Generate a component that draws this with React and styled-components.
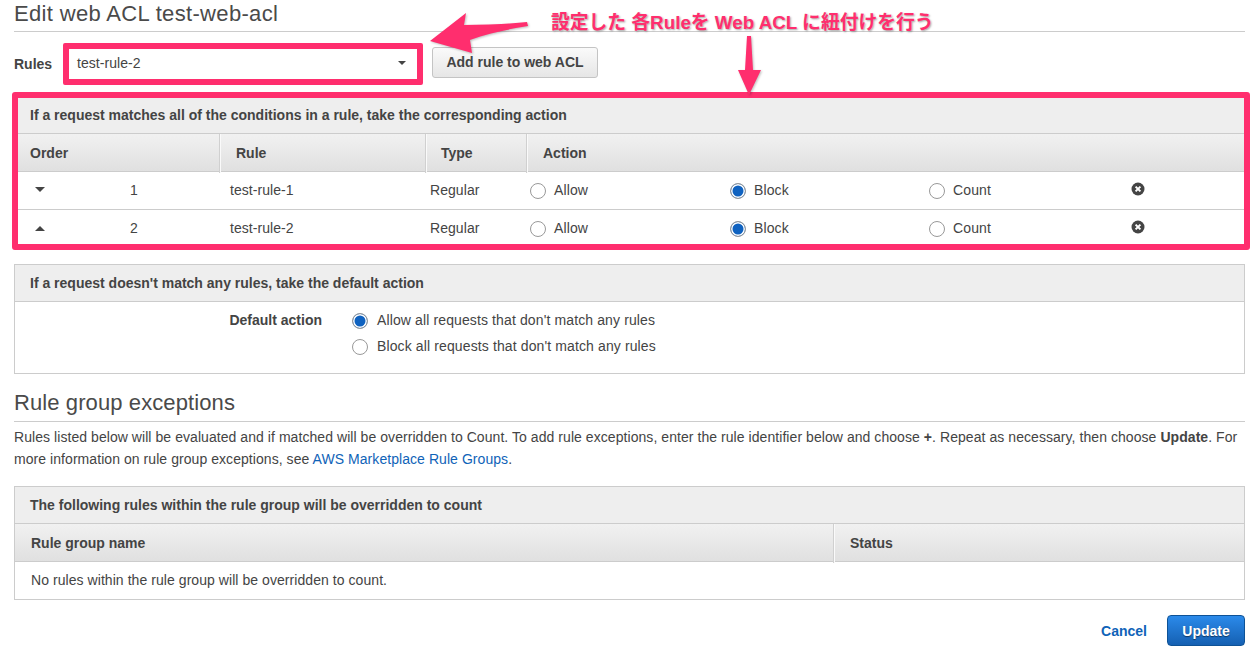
import React from 'react';
import styled, { createGlobalStyle } from 'styled-components';

const pink = '#ff2e6e';

const GlobalStyle = createGlobalStyle`
  html, body {
    margin: 0;
    padding: 0;
    background: #fff;
  }
  body {
    font-family: "Liberation Sans", Arial, sans-serif;
    font-size: 14px;
    letter-spacing: 0.06px;
    color: #444;
  }
`;

const Page = styled.div`
  position: relative;
  box-sizing: border-box;
  width: 1255px;
  height: 658px;
  padding: 0 10px 0 14px;
  overflow: hidden;
`;

const SectionTitle = styled.h2`
  margin: 0;
  height: ${(p) => p.$height || 31}px;
  line-height: ${(p) => p.$lineHeight || 27}px;
  font-size: 22px;
  font-weight: 400;
  letter-spacing: ${(p) => p.$spacing}px;
  color: #4a4a4a;
  border-bottom: 1px solid #ccc;
`;

const RulesRow = styled.div`
  display: flex;
  align-items: center;
  height: 42px;
  margin-top: 11px;
`;

const RulesLabel = styled.label`
  width: 49px;
  font-weight: 700;
  letter-spacing: 0;
`;

const SelectFrame = styled.div`
  box-sizing: border-box;
  display: flex;
  align-items: center;
  justify-content: space-between;
  width: 360px;
  height: 42px;
  padding: 0 11px 2px 8px;
  background: #fff;
  border: 6px solid ${pink};
  border-radius: 2px;
`;

const SelectCaret = styled.span`
  width: 0;
  height: 0;
  margin-top: -1px;
  border-left: 4px solid transparent;
  border-right: 4px solid transparent;
  border-top: 4px solid #444;
`;

const Button = styled.button`
  box-sizing: border-box;
  height: 31px;
  padding: 0;
  font: 700 14px "Liberation Sans", Arial, sans-serif;
  color: #444;
  background: linear-gradient(#fafafa, #e6e6e6);
  border: 1px solid #c4c4c4;
  border-radius: 3px;
`;

const AddButton = styled(Button)`
  width: 166px;
  margin-left: 9px;
  margin-top: -4px;
`;

const RulesPanelWrap = styled.div`
  position: relative;
  margin-top: 7px;
  padding-top: 4px;
`;

const Highlight = styled.div`
  position: absolute;
  top: 0;
  left: -2px;
  right: -5px;
  height: 158px;
  box-sizing: border-box;
  border: 6px solid ${pink};
  border-radius: 3px;
  pointer-events: none;
`;

const Panel = styled.section`
  box-sizing: border-box;
  border: 1px solid #ccc;
  margin-top: ${(p) => p.$top || 0}px;
  background: #fff;
`;

const PanelHeader = styled.div`
  box-sizing: border-box;
  height: 37px;
  line-height: 37px;
  padding-left: 15px;
  font-weight: 700;
  letter-spacing: 0;
  background: #eee;
  border-bottom: 1px solid #ccc;
`;

const ColumnRow = styled.div`
  display: grid;
  grid-template-columns: ${(p) => p.$columns};
  box-sizing: border-box;
  height: 38px;
  background: linear-gradient(#f1f1f1, #e0e0e0);
  border-bottom: 1px solid #ccc;
`;

const ColumnHead = styled.div`
  box-sizing: border-box;
  line-height: 39px;
  padding-left: ${(p) => p.$pad || 15}px;
  font-weight: 700;
  letter-spacing: 0;
  border-left: ${(p) => (p.$first ? 'none' : '1px solid #fafafa')};
  border-right: ${(p) => (p.$last ? 'none' : '1px solid #d0d0d0')};
`;

const RuleRow = styled.div`
  display: grid;
  grid-template-columns: 23px 172px 200px 100px 200px 199px 202px 1fr;
  align-items: center;
  box-sizing: border-box;
  height: 38px;
  padding: 0 0 2px 20px;
  border-bottom: ${(p) => (p.$last ? 'none' : '1px solid #ccc')};
`;

const OrderCaret = styled.span`
  width: 0;
  height: 0;
  border-left: 5px solid transparent;
  border-right: 5px solid transparent;
  ${(p) => (p.$up ? 'border-bottom: 5px solid #444;' : 'border-top: 5px solid #444;')}
`;

const OrderNumber = styled.span`
  padding-left: 72px;
`;

const RadioLabel = styled.label`
  display: flex;
  align-items: center;
  gap: ${(p) => p.$gap || 8}px;
  letter-spacing: 0.12px;
  white-space: nowrap;
`;

const Radio = styled.span`
  box-sizing: border-box;
  display: inline-block;
  flex: none;
  width: 16px;
  height: 16px;
  margin-top: 2px;
  border-radius: 50%;
  border: 1px solid #999;
  background: ${(p) => (p.$checked ? '#0f62c0' : '#fff')};
  box-shadow: ${(p) => (p.$checked ? 'inset 0 0 0 1.5px #fff' : 'none')};
`;

const RemoveIcon = styled.svg`
  display: block;
  width: 14px;
  height: 14px;
  margin-top: -2px;
`;

const DefaultBody = styled.div`
  display: grid;
  grid-template-columns: 337px 1fr;
  box-sizing: border-box;
  height: 71px;
  padding-top: 5px;
`;

const DefaultLabel = styled.div`
  font-weight: 700;
  letter-spacing: 0;
  text-align: right;
  padding-right: 30px;
  line-height: 26px;
`;

const DefaultOptions = styled.div`
  display: flex;
  flex-direction: column;
`;

const DefaultOption = styled(RadioLabel)`
  height: 26px;
`;

const Paragraph = styled.p`
  margin: 4px 0 0;
  line-height: 22px;
  height: 44px;
`;

const Link = styled.a`
  color: #0f63b8;
  text-decoration: none;
`;

const EmptyRow = styled.div`
  box-sizing: border-box;
  height: 37px;
  line-height: 37px;
  padding-left: 16px;
`;

const Footer = styled.div`
  display: flex;
  justify-content: flex-end;
  align-items: center;
  gap: 20px;
  margin-top: 15px;
`;

const CancelLink = styled(Link)`
  font-weight: 700;
  letter-spacing: 0;
`;

const UpdateButton = styled(Button)`
  width: 78px;
  color: #fff;
  background: linear-gradient(#2b8aea, #1560b2);
  border-color: #0e5296;
  border-radius: 4px;
  text-shadow: 0 1px 1px rgba(0, 0, 0, 0.5);
`;

const Annotation = styled.div`
  position: absolute;
  top: 12px;
  left: 551px;
  white-space: nowrap;
  font-family: "Liberation Sans", "Noto Sans CJK JP", sans-serif;
  font-size: 18.8px;
  font-weight: 700;
  letter-spacing: 0;
  line-height: 22px;
  color: ${pink};
  text-shadow: 1px 1px 2px rgba(0, 0, 0, 0.35), 0 0 2px #fff;
`;

const ArrowLayer = styled.svg`
  position: absolute;
  top: 0;
  left: 0;
  width: 1255px;
  height: 110px;
  pointer-events: none;
  filter: drop-shadow(1px 1px 1px rgba(0, 0, 0, 0.25));
`;

const rules = [
  { order: 1, name: 'test-rule-1', up: false },
  { order: 2, name: 'test-rule-2', up: true },
];

function Remove() {
  return (
    <RemoveIcon viewBox="0 0 14 14">
      <circle cx="7" cy="7" r="6.5" fill="#444" />
      <path d="M4.6 4.6l4.8 4.8M9.4 4.6l-4.8 4.8" stroke="#fff" strokeWidth="2" />
    </RemoveIcon>
  );
}

function Option({ checked, children }) {
  return (
    <RadioLabel>
      <Radio $checked={checked} />
      {children}
    </RadioLabel>
  );
}

export default function App() {
  return (
    <Page>
      <GlobalStyle />
      <SectionTitle $spacing={0.33}>Edit web ACL test-web-acl</SectionTitle>

      <RulesRow>
        <RulesLabel>Rules</RulesLabel>
        <SelectFrame>
          test-rule-2
          <SelectCaret />
        </SelectFrame>
        <AddButton>Add rule to web ACL</AddButton>
      </RulesRow>

      <RulesPanelWrap>
        <Panel>
          <PanelHeader>If a request matches all of the conditions in a rule, take the corresponding action</PanelHeader>
          <ColumnRow $columns="205px 206px 101px 1fr">
            <ColumnHead $first>Order</ColumnHead>
            <ColumnHead>Rule</ColumnHead>
            <ColumnHead $pad={14}>Type</ColumnHead>
            <ColumnHead $last>Action</ColumnHead>
          </ColumnRow>
          {rules.map((rule, i) => (
            <RuleRow key={rule.order} $last={i === rules.length - 1}>
              <OrderCaret $up={rule.up} />
              <OrderNumber>{rule.order}</OrderNumber>
              <span>{rule.name}</span>
              <span>Regular</span>
              <Option>Allow</Option>
              <Option checked>Block</Option>
              <Option>Count</Option>
              <Remove />
            </RuleRow>
          ))}
        </Panel>
        <Highlight />
      </RulesPanelWrap>

      <Panel $top={15}>
        <PanelHeader>If a request doesn't match any rules, take the default action</PanelHeader>
        <DefaultBody>
          <DefaultLabel>Default action</DefaultLabel>
          <DefaultOptions>
            <DefaultOption $gap={9}>
              <Radio $checked />
              Allow all requests that don't match any rules
            </DefaultOption>
            <DefaultOption $gap={9}>
              <Radio />
              Block all requests that don't match any rules
            </DefaultOption>
          </DefaultOptions>
        </DefaultBody>
      </Panel>

      <SectionTitle $height={47} $lineHeight={58} $spacing={0.1}>Rule group exceptions</SectionTitle>
      <Paragraph>
        Rules listed below will be evaluated and if matched will be overridden to Count. To add rule exceptions, enter the rule identifier below and choose <b>+</b>. Repeat as necessary, then choose <b>Update</b>. For more information on rule group exceptions, see <Link>AWS Marketplace Rule Groups</Link>.
      </Paragraph>

      <Panel $top={16}>
        <PanelHeader>The following rules within the rule group will be overridden to count</PanelHeader>
        <ColumnRow $columns="819px 1fr">
          <ColumnHead $first $pad={16}>Rule group name</ColumnHead>
          <ColumnHead $last>Status</ColumnHead>
        </ColumnRow>
        <EmptyRow>No rules within the rule group will be overridden to count.</EmptyRow>
      </Panel>

      <Footer>
        <CancelLink>Cancel</CancelLink>
        <UpdateButton>Update</UpdateButton>
      </Footer>

      <Annotation>設定した 各Ruleを Web ACL に紐付けを行う</Annotation>
      <ArrowLayer viewBox="0 0 1255 110">
        <path d="M430 41L466 13L464 25C485 25 510 24 527 22L528 26C510 29 488 33 470 40L472 53Z" fill={pink} />
        <path d="M747 36L751 36L753 70L761 70L749 95L738 70L745 70Z" fill={pink} />
      </ArrowLayer>
    </Page>
  );
}
